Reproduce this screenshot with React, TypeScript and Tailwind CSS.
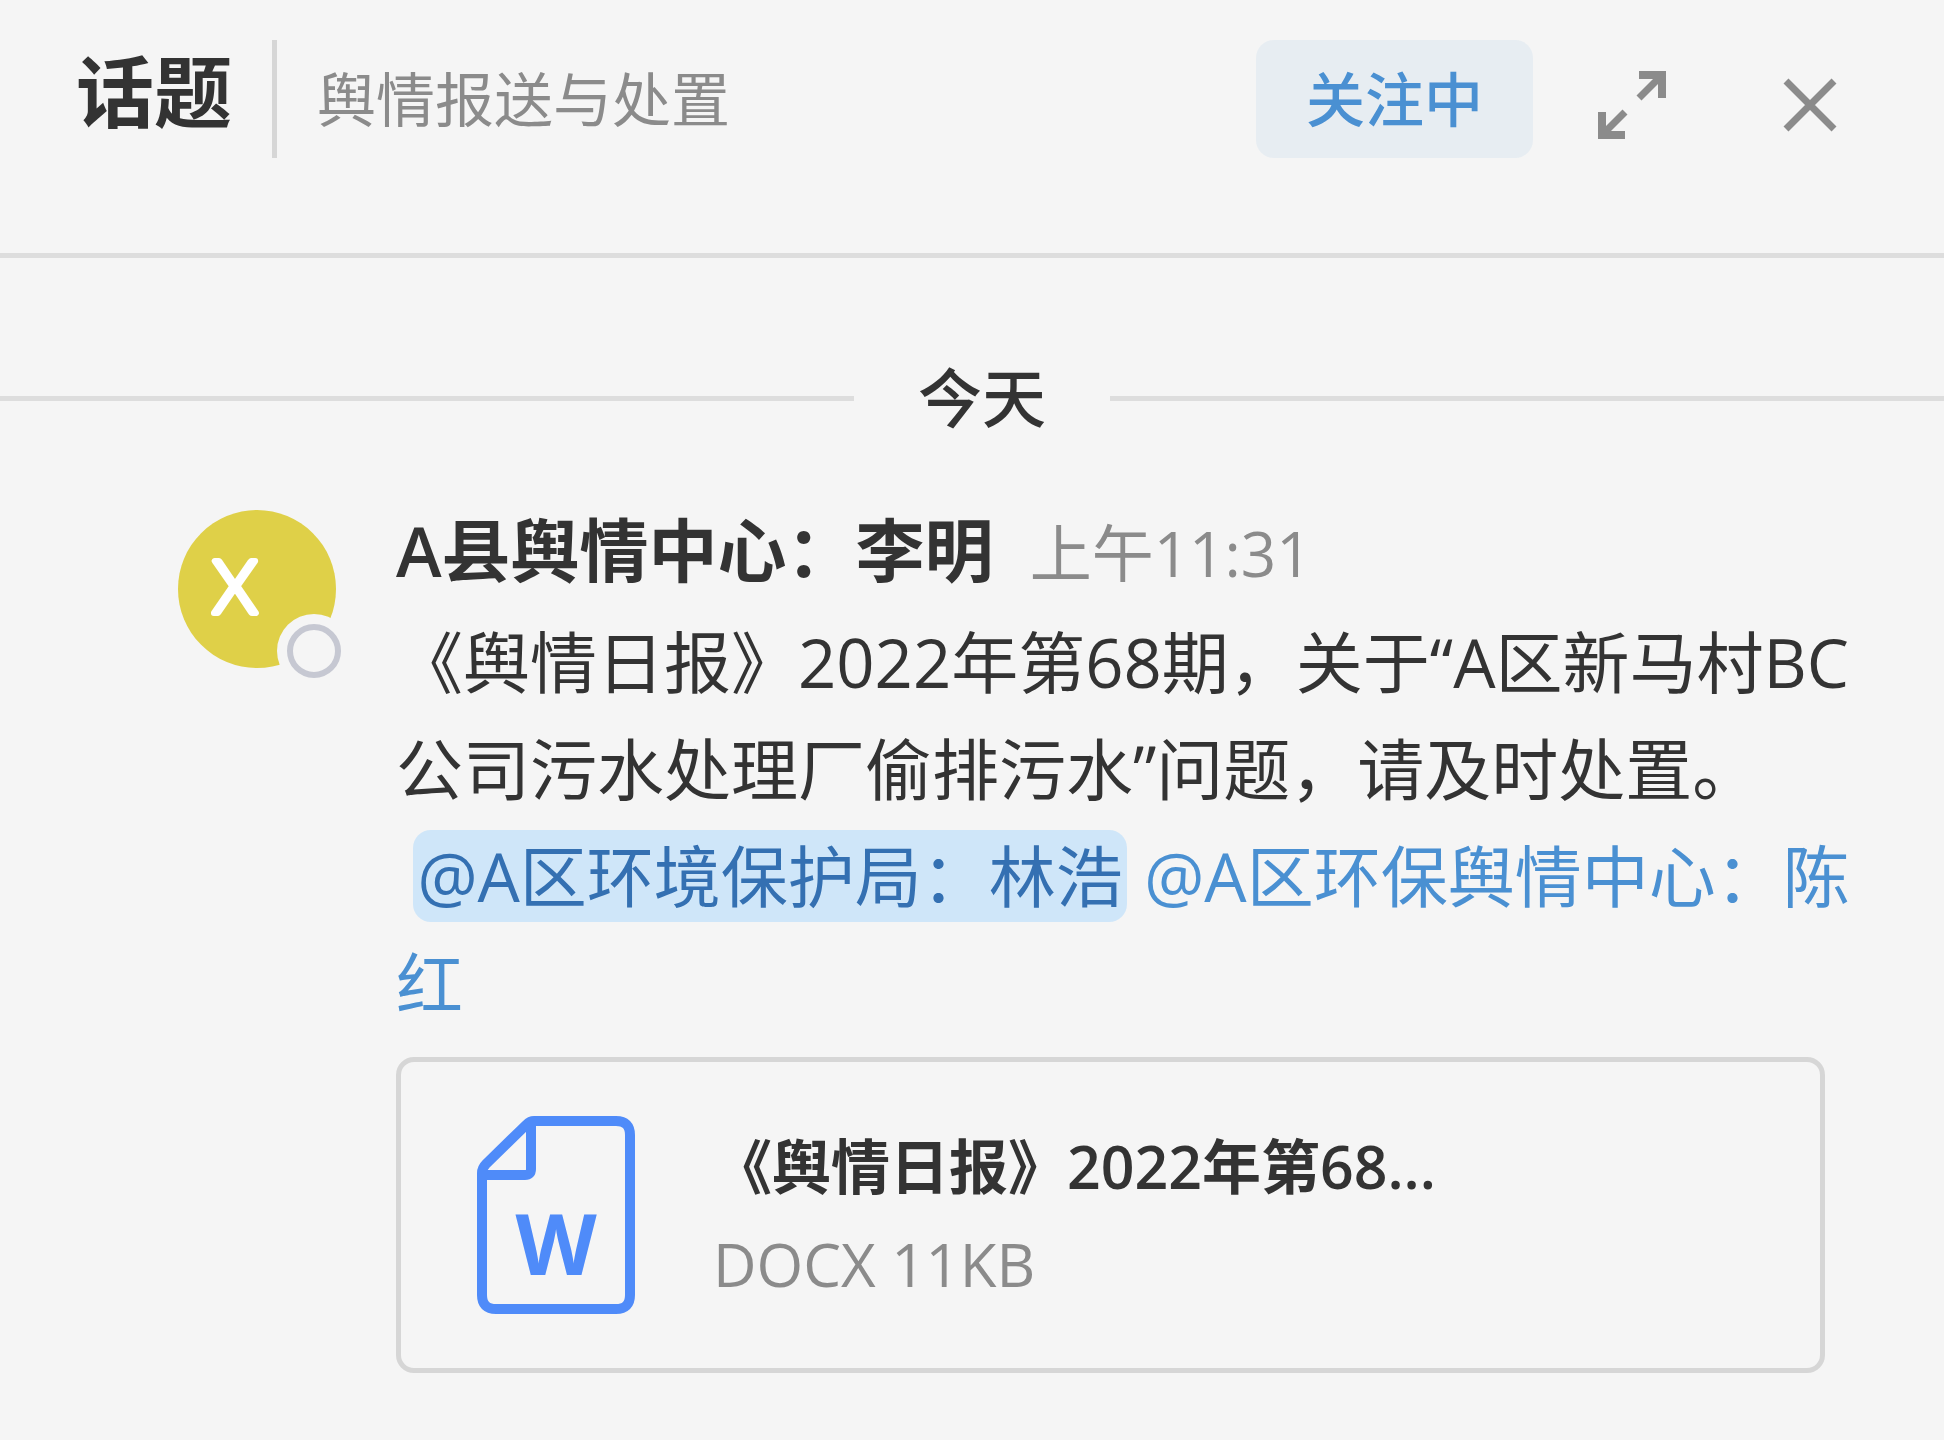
const ExpandIcon = () => (
  <svg viewBox="0 0 68 68" className="size-[68px]" fill="none" stroke="#8b8b8b" strokeWidth="8" aria-hidden="true">
    <path d="M41 4H64V27" />
    <path d="M41 27L62 6" strokeWidth="7" />
    <path d="M27 64H4V41" />
    <path d="M27 41L6 62" strokeWidth="7" />
  </svg>
);

const CloseIcon = () => (
  <svg viewBox="0 0 54 54" className="size-[54px]" fill="none" stroke="#8b8b8b" strokeWidth="7" aria-hidden="true">
    <path d="M3 3L51 51M51 3L3 51" />
  </svg>
);

const WordFileIcon = () => (
  <svg viewBox="0 0 158 198" className="h-[198px] w-[158px] shrink-0" fill="none" stroke="#4f8bf9" strokeWidth="10" aria-hidden="true">
    <path
      d="M57 5H139Q153 5 153 19V179Q153 193 139 193H19Q5 193 5 179V57Q5 52 9 48L49 9Q53 5 57 5Z"
      strokeLinejoin="round"
    />
    <path d="M54 8V53Q54 59 48 59H7" />
    <text
      x="79"
      y="159"
      textAnchor="middle"
      fill="#4f8bf9"
      stroke="none"
      className="font-['Open_Sans',sans-serif] text-[84px] font-bold"
    >
      W
    </text>
  </svg>
);

const Avatar = () => (
  <div className="relative size-[158px] shrink-0 rounded-full bg-[#dfd048]">
    <svg viewBox="0 0 158 158" className="size-full" role="img" aria-label="X">
      <text
        x="57"
        y="103"
        textAnchor="middle"
        fill="#fff"
        stroke="#fff"
        strokeWidth="6"
        strokeLinejoin="round"
        className="font-['Lato',sans-serif] text-[72px] font-light"
      >
        X
      </text>
    </svg>
    <span className="absolute -right-[15px] -bottom-5 flex size-[74px] items-center justify-center rounded-full bg-[#f5f5f5]">
      <span className="size-[54px] rounded-full border-[6px] border-[#c6c8d2]" />
    </span>
  </div>
);

const App: React.FC = () => {
  return (
    <main
      lang="zh-CN"
      className="min-h-screen overflow-hidden bg-[#f5f5f5] font-['Open_Sans','Noto_Sans_CJK_SC',sans-serif] text-[#333]"
    >
      <header className="flex h-[258px] items-start border-b-[5px] border-[#dddddd] pt-10 pr-[107px] pl-[76px]">
        <h1 className="text-[78px] leading-[104px] font-bold">话题</h1>
        <div className="ml-10 h-[118px] border-l-[5px] border-[#d6d6d6] pl-10 text-[59px] leading-[118px] text-[#8b8b8b]">
          舆情报送与处置
        </div>
        <button
          type="button"
          className="ml-auto h-[118px] rounded-[18px] bg-[#e7edf2] px-[50px] text-[59px] leading-[118px] font-medium text-[#4a90d2]"
        >
          关注中
        </button>
        <button type="button" aria-label="展开" className="mt-[31px] ml-[65px]">
          <ExpandIcon />
        </button>
        <button type="button" aria-label="关闭" className="mt-[38px] ml-[117px]">
          <CloseIcon />
        </button>
      </header>

      <div className="-mr-5 mt-[95px] flex items-center">
        <div className="h-[5px] flex-1 bg-[#dddddd]" />
        <h2 className="px-16 text-[64px] leading-[90px] font-medium">今天</h2>
        <div className="h-[5px] flex-1 bg-[#dddddd]" />
      </div>

      <article className="flex gap-[60px] pt-[67px] pr-[86px] pb-16 pl-[178px]">
        <Avatar />
        <div className="min-w-0 flex-1">
          <div className="flex h-[99px] items-baseline gap-9 leading-[81px]">
            <span className="text-[69px] font-semibold">A县舆情中心：李明</span>
            <time className="text-[62px] text-[#8b8b8b]">上午11:31</time>
          </div>

          <p className="text-[67px] leading-[107px] whitespace-pre-wrap">
            {'《舆情日报》2022年第68期，关于“A区新马村BC公司污水处理厂偷排污水”问题，请及时处置。\n '}
            <a href="#linhao" className="rounded-[18px] bg-[#cfe6f9] px-1 text-[#3470b2]">@A区环境保护局：林浩</a>
            {' '}
            <a href="#chenhong" className="text-[#4a90d2]">@A区环保舆情中心：陈红</a>
          </p>

          <a
            href="#file"
            className="mt-5 mr-[33px] flex h-[316px] items-start rounded-[18px] border-[5px] border-[#d6d6d6] pt-[54px] pl-[76px]"
          >
            <WordFileIcon />
            <div className="ml-[78px] min-w-0">
              <div className="text-[59px] leading-[100px] font-semibold">《舆情日报》2022年第68...</div>
              <div className="text-[60px] leading-[96px] text-[#8b8b8b]">DOCX 11KB</div>
            </div>
          </a>
        </div>
      </article>
    </main>
  );
};

export default App;
